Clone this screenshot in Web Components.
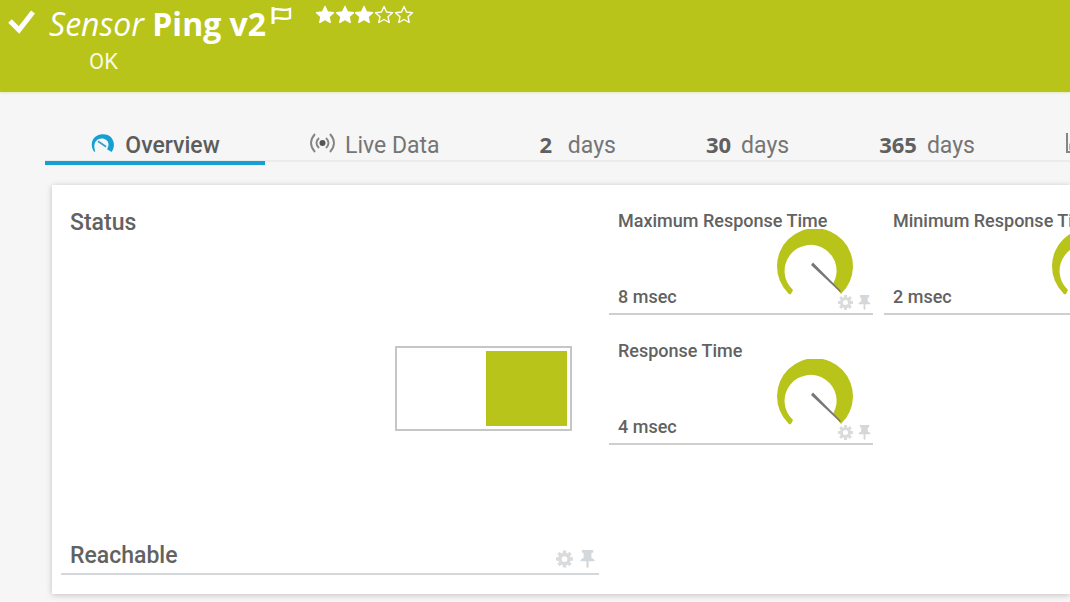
<!DOCTYPE html>
<html lang="en">
<head>
<meta charset="utf-8">
<title>Sensor Ping v2</title>
<style>
html, body { margin: 0; min-height: 100%; background: #f6f6f6; }
body { font-family: Roboto, "Liberation Sans", sans-serif; color: #5f5f5f; overflow: hidden; }
</style>
</head>
<body>
<sensor-page></sensor-page>
<script>
const define = (name, html) => {
  const template = document.createElement('template');
  template.innerHTML = html;
  customElements.define(name, class extends HTMLElement {
    constructor() {
      super();
      this.attachShadow({ mode: 'open' }).append(template.content.cloneNode(true));
    }
  });
};

define('priority-stars', `
<style>
:host { display: block; }
svg { display: block; }
</style>
<svg width="100" height="22" viewBox="0 -1 100 22" role="img" aria-label="Priority 3 of 5" fill="#fff" stroke="#fff" stroke-width="1.4" stroke-linejoin="round">
<defs><path id="s" d="M10 1.500l2.500 5.500 6 .7-4.500 4 1.200 5.800-5.200-3-5.200 3L6 11.700l-4.500-4 6-.7z"/></defs>
<use href="#s"/><use href="#s" x="20"/><use href="#s" x="39"/>
<use href="#s" x="59" fill="none"/><use href="#s" x="79" fill="none"/>
</svg>`);

define('sensor-header', `
<style>
:host { display: block; background: #b8c41a; color: #fff; padding: 4px 8px 18px; box-shadow: 0 1px 2px #e4e7bb; }
.row { display: flex; align-items: flex-start; height: 40px; }
.check { margin: 4px 13px 0 0; }
h1 { margin: 0; font: 700 32px/40px "Open Sans", sans-serif; white-space: pre; }
em { font-weight: 400; }
.flag { margin: 2px 23px 0 4px; }
p { margin: 5px 0 0 81px; font-size: 22px; line-height: 25px; color: #f7f8df; }
svg { display: block; flex: none; }
</style>
<div class="row">
<svg class="check" width="28" height="26" viewBox="0 0 28 26"><path d="M2 13l9 9L25 4" fill="none" stroke="#fff" stroke-width="5"/></svg>
<h1><em>Sensor</em> Ping v2</h1>
<svg class="flag" width="22" height="20" viewBox="0 0 22 20" fill="none" stroke="#fff"><path d="M3 1v17" stroke-width="3"/><path d="M3 4c5-3 9 2 17-1v9c-7 3-11-2-17 1" stroke-width="2.400"/></svg>
<priority-stars></priority-stars>
</div>
<p>OK</p>`);

define('tab-bar', `
<style>
:host { display: block; padding: 34px 0 0 45px; }
nav { display: flex; border-bottom: 2px solid #ebebeb; }
::slotted(sensor-tab) { flex: none; }
</style>
<nav><slot></slot></nav>`);

define('sensor-tab', `
<style>
:host { display: block; margin-bottom: -2px; }
:host([active]) { width: 220px; }
:host([roomy]) { padding-right: 10px; }
a { display: flex; align-items: center; justify-content: center; gap: 10px; height: 32px; padding: 4px 45px 0; font-size: 23px; line-height: 32px; color: #757575; text-decoration: none; white-space: nowrap; }
:host([range]) a { align-items: baseline; }
:host([active]) a { color: #5c5c5c; font-weight: 500; border-bottom: 4px solid #159fd3; height: 31px; margin-bottom: -3px; }
::slotted(b) { font: 700 22px/24px "Open Sans", sans-serif; color: #606060; }
::slotted(svg) { flex: none; margin-bottom: 6px; }
</style>
<a href="#"><slot></slot></a>`);

define('tool-icons', `
<style>
:host { display: flex; gap: 5px; }
button { all: unset; display: block; cursor: pointer; }
svg { display: block; }
:host([large]) { gap: 6px; }
:host([large]) svg { width: 17px; height: 18px; }
</style>
<button aria-label="Settings"><svg width="15" height="15" viewBox="0 0 16 16"><g fill="none" stroke="#d9dbdd"><circle cx="8" cy="8" r="4.300" stroke-width="3.200"/><path d="M8 0v3M8 13v3M0 8h3M13 8h3M2.300 2.300l2.200 2.200M11.500 11.500l2.200 2.200M2.300 13.700l2.200-2.200M11.500 4.500l2.200-2.200" stroke-width="3.200"/></g></svg></button>
<button aria-label="Pin"><svg width="13" height="15" viewBox="0 0 14 16"><path d="M2 0h10v2.500h-1.500V7c1.800.6 2.700 1.500 3 3H8v5l-1 1-1-1v-5H.5c.3-1.500 1.200-2.400 3-3V2.500H2z" fill="#d5d8da"/></svg></button>`);

define('channel-gauge', `
<style>
:host { display: flex; flex-direction: column; justify-content: space-between; box-sizing: border-box; height: 106px; padding: 0 9px 4px; border-bottom: 2px solid #cfcfcf; position: relative; font-weight: 500; font-size: 18px; line-height: 24px; white-space: nowrap; color: #626262; }
.dial { position: absolute; right: 19px; top: 20px; }
tool-icons { position: absolute; right: 2px; bottom: 3px; }
</style>
<div><slot name="name"></slot></div>
<div><slot></slot></div>
<svg class="dial" width="78" height="70" viewBox="0 0 78 70" role="img" aria-label="Gauge">
<path d="M12 64A38 38 0 1 1 65 65L57 55A26 26 0 1 0 17 61L15 65Q13 66 12 64Z" fill="#b8c41a"/>
<path d="M35 36l2-2.500L65 62l-1 1z" fill="#777"/>
</svg>
<tool-icons></tool-icons>`);

define('status-panel', `
<style>
:host { display: flex; flex-direction: column; height: 367px; color: #626262; }
h2, .foot { margin: 0; font-size: 23px; line-height: 30px; font-weight: 500; padding: 0 9px; }
.middle { flex: 1; display: flex; align-items: center; justify-content: flex-end; padding: 0 27px 2px 0; }
.lookup { box-sizing: border-box; display: flex; justify-content: flex-end; width: 177px; height: 85px; padding: 3px; border: 2px solid #c6c6c6; background: #fff; }
.lookup i { width: 81px; background: #b8c41a; }
.foot { display: flex; justify-content: space-between; align-items: center; padding: 0 3px 2px 9px; border-bottom: 2px solid #d5d8da; }
tool-icons { padding-top: 6px; }
</style>
<h2>Status</h2>
<div class="middle"><div class="lookup" role="img" aria-label="Reachable"><i></i></div></div>
<div class="foot"><span>Reachable</span><tool-icons large></tool-icons></div>`);

define('overview-card', `
<style>
:host { display: grid; grid-template-columns: 538px 1fr; gap: 10px; margin: 23px 0 8px 52px; padding: 23px 0 19px 9px; background: #fff; box-shadow: 0 1px 6px #00000038; }
.gauges { display: grid; grid-template-columns: repeat(2, 264px); gap: 24px 11px; align-content: start; padding-top: 1px; }
</style>
<status-panel></status-panel>
<div class="gauges"><slot></slot></div>`);

define('sensor-page', `
<style>:host { display: block; overflow: hidden; }</style>
<sensor-header></sensor-header>
<tab-bar>
<sensor-tab active><svg width="25" height="20" viewBox="0 0 26 22"><path d="M4 21C-2 13 2 2 13 1.500S29 12 23 21l-5-3c4-7 0-12-6-12S2 12 5 20z" fill="#159fd3"/><path d="M8 9l9 6" stroke="#3f9dc2" stroke-width="2"/></svg>Overview</sensor-tab>
<sensor-tab roomy><svg width="25" height="20" viewBox="0 0 25 20" fill="none" stroke="#858585" stroke-width="1.900"><path d="M5 1Q-3 10 5 19M9 5Q4 10 9 15M20 1Q28 10 20 19M16 5Q21 10 16 15"/><circle cx="12.500" cy="10" r="3" fill="#555" stroke="none"/></svg>Live Data</sensor-tab>
<sensor-tab range><b>2</b><span>&nbsp;days</span></sensor-tab>
<sensor-tab range><b>30</b><span>days</span></sensor-tab>
<sensor-tab range><b>365</b><span>days</span></sensor-tab>
<sensor-tab><svg width="24" height="20" viewBox="0 0 24 20" role="img" aria-label="Historic data"><path d="M2 0v19h22" fill="none" stroke="#858585" stroke-width="2"/><path d="M4 17v-6l6-5 4 4 8-7v14z" fill="#b5b5ae"/></svg></sensor-tab>
</tab-bar>
<overview-card>
<channel-gauge><span slot="name">Maximum Response Time</span>8 msec</channel-gauge>
<channel-gauge><span slot="name">Minimum Response Time</span>2 msec</channel-gauge>
<channel-gauge><span slot="name">Response Time</span>4 msec</channel-gauge>
</overview-card>`);
</script>
</body>
</html>
